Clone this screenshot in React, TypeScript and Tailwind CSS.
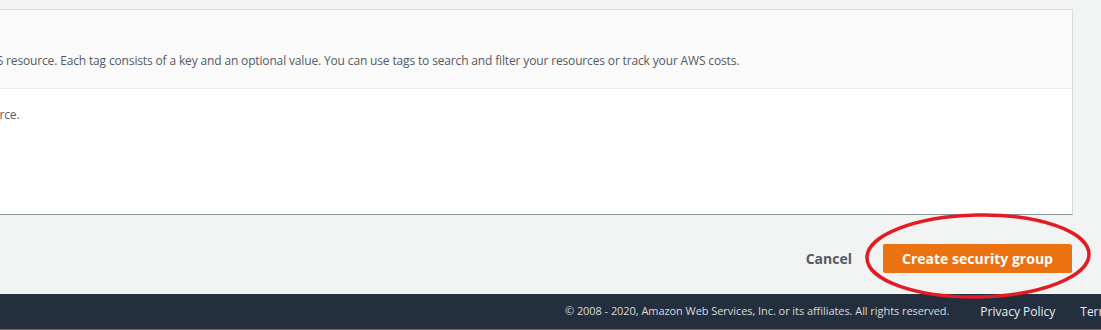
import React from 'react';

const App: React.FC = () => {
  return (
    <div
      className="relative w-[1101px] h-[330px] overflow-hidden bg-[#f2f3f3] flex flex-col"
      style={{ fontFamily: '"Open Sans", "Liberation Sans", sans-serif' }}
    >
      <div className="pt-[9px] pr-[28px]">
        <div className="ml-[-238px] bg-white border-t border-r border-[#d5dbdb] border-b-[#879596] border-b">
          <div className="h-[79px] bg-[#fafafa] border-b border-[#eaeded] px-[20px] pt-[12px]">
            <h2 className="text-[16px] font-bold text-[#16191f] leading-[22px]">Tags - optional</h2>
            <p className="mt-[7px] text-[12px] tracking-[-0.15px] text-[#545b64] whitespace-nowrap leading-[20px]">
              A tag is a label that you assign to an AWS resource. Each tag consists of a key and an optional value. You can use tags to search and filter your resources or track your AWS costs.
            </p>
          </div>
          <div className="h-[125px] pl-[54px] pt-[16px]">
            <p className="text-[12px] tracking-[-0.15px] text-[#545b64] leading-[20px] whitespace-nowrap">No tags associated with the resource.</p>
          </div>
        </div>
      </div>

      <div className="flex justify-end items-center gap-[31px] pr-[29px] pt-[29px]">
        <button className="text-[14px] font-bold text-[#545b64] leading-[29px]">Cancel</button>
        <button className="w-[189px] h-[29px] bg-[#ec7211] text-white text-[14px] font-bold rounded-[2px]">
          Create security group
        </button>
      </div>

      <div className="mt-auto h-[35px] bg-[#232f3e] flex items-center pl-[565px] whitespace-nowrap">
        <span className="text-[11px] tracking-[-0.06px] text-[#d5dbdb]">© 2008 - 2020, Amazon Web Services, Inc. or its affiliates. All rights reserved.</span>
        <span className="ml-[31px] text-[12px] text-[#eaeded]">Privacy Policy</span>
        <span className="ml-[25px] text-[12px] text-[#eaeded]">Terms of Use</span>
      </div>
      <div className="h-[1px] bg-[#6b6d63]" />

      <svg className="absolute left-[862px] top-[210px] w-[232px] h-[90px] pointer-events-none" viewBox="0 0 232 90" fill="none">
        <ellipse cx="116" cy="46" rx="111" ry="41" stroke="#e31b23" strokeWidth="3.5" transform="rotate(-1 116 46)" />
      </svg>
    </div>
  );
};

export default App;
